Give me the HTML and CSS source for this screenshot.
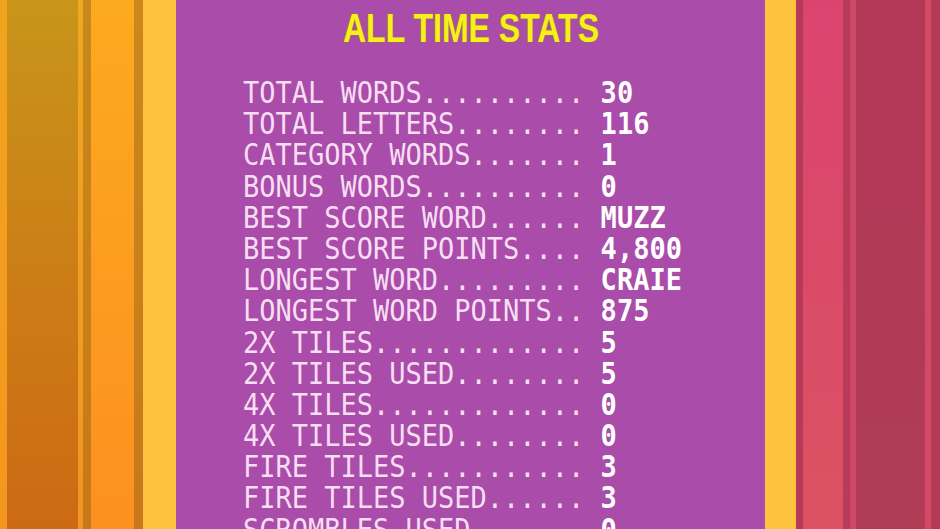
FILE: index.html
```html
<!DOCTYPE html>
<html>
<head>
<meta charset="utf-8">
<link rel="stylesheet" href="styles.css">
</head>
<body>
<div class="stripes left">
  <div class="s l1"></div>
  <div class="s l2"></div>
  <div class="s l3"></div>
  <div class="s l4"></div>
  <div class="s l5"></div>
  <div class="s l6"></div>
  <div class="s l7"></div>
</div>
<main class="panel">
  <h1 class="title">ALL TIME STATS</h1>
  <div class="stats">
    <div class="row"><span class="label">TOTAL WORDS..........</span> <span class="value">30</span></div>
    <div class="row"><span class="label">TOTAL LETTERS........</span> <span class="value">116</span></div>
    <div class="row"><span class="label">CATEGORY WORDS.......</span> <span class="value">1</span></div>
    <div class="row"><span class="label">BONUS WORDS..........</span> <span class="value">0</span></div>
    <div class="row"><span class="label">BEST SCORE WORD......</span> <span class="value">MUZZ</span></div>
    <div class="row"><span class="label">BEST SCORE POINTS....</span> <span class="value">4,800</span></div>
    <div class="row"><span class="label">LONGEST WORD.........</span> <span class="value">CRAIE</span></div>
    <div class="row"><span class="label">LONGEST WORD POINTS..</span> <span class="value">875</span></div>
    <div class="row"><span class="label">2X TILES.............</span> <span class="value">5</span></div>
    <div class="row"><span class="label">2X TILES USED........</span> <span class="value">5</span></div>
    <div class="row"><span class="label">4X TILES.............</span> <span class="value">0</span></div>
    <div class="row"><span class="label">4X TILES USED........</span> <span class="value">0</span></div>
    <div class="row"><span class="label">FIRE TILES...........</span> <span class="value">3</span></div>
    <div class="row"><span class="label">FIRE TILES USED......</span> <span class="value">3</span></div>
    <div class="row"><span class="label">SCROMBLES USED.......</span> <span class="value">0</span></div>
  </div>
</main>
<div class="stripes right">
  <div class="s r1"></div>
  <div class="s r2"></div>
  <div class="s r3"></div>
  <div class="s r4"></div>
  <div class="s r5"></div>
  <div class="s r6"></div>
  <div class="s r7"></div>
  <div class="s r8"></div>
</div>
</body>
</html>
```
FILE: styles.css
```css
html, body {
  margin: 0;
  padding: 0;
}
body {
  width: 940px;
  height: 529px;
  overflow: hidden;
  display: flex;
  background: #aa4caa;
}
.stripes {
  display: flex;
  height: 529px;
  flex: none;
}
.s {
  height: 100%;
  flex: none;
}
.l1 { width: 7px; background: linear-gradient(#f2a41e, #f4961e); }
.l2 { width: 71px; background: linear-gradient(#c8951a, #cc7a16 60%, #cc6a14); }
.l3 { width: 5px; background: linear-gradient(#efa820, #f39420); }
.l4 { width: 8px; background: linear-gradient(#c8891a, #c8781a); }
.l5 { width: 43px; background: linear-gradient(#fcaa1f, #fc9a20 60%, #fc9020); }
.l6 { width: 9px; background: linear-gradient(#cc881c, #c8781a); }
.l7 { width: 33px; background: #fdc33e; }

.r1 { width: 31px; background: #fdc33e; }
.r2 { width: 7px; background: #b63a58; }
.r3 { width: 40px; background: linear-gradient(#dc4470, #da4a68 50%, #dc5262); }
.r4 { width: 7px; background: #b83b5a; }
.r5 { width: 6px; background: #d04868; }
.r6 { width: 69px; background: linear-gradient(#b23858, #b03c56); }
.r7 { width: 6px; background: #d44a66; }
.r8 { width: 9px; background: #b23a58; }

.panel {
  flex: none;
  width: 589px;
  height: 529px;
  background: #aa4caa;
  display: flex;
  flex-direction: column;
  padding-top: 8px;
  box-sizing: border-box;
}
.title {
  margin: 0;
  align-self: center;
  font-family: "Liberation Sans", Arial, sans-serif;
  font-weight: bold;
  font-size: 40px;
  line-height: 40px;
  color: #f6ef1c;
  transform: scaleX(0.8);
  text-shadow: 0 0 2px #9a7a30, 0 0 1px #9a7a30;
}
.stats {
  margin-top: 29px;
  padding-left: 67px;
  font-family: "DejaVu Sans Mono", "Liberation Mono", monospace;
  font-size: 30px;
  line-height: 31.2px;
  transform: scaleX(0.9);
  transform-origin: 67px 0;
}
.row {
  white-space: pre;
  height: 31.2px;
}
.label {
  color: #f8def3;
}
.value {
  color: #ffffff;
  font-weight: bold;
}
```
